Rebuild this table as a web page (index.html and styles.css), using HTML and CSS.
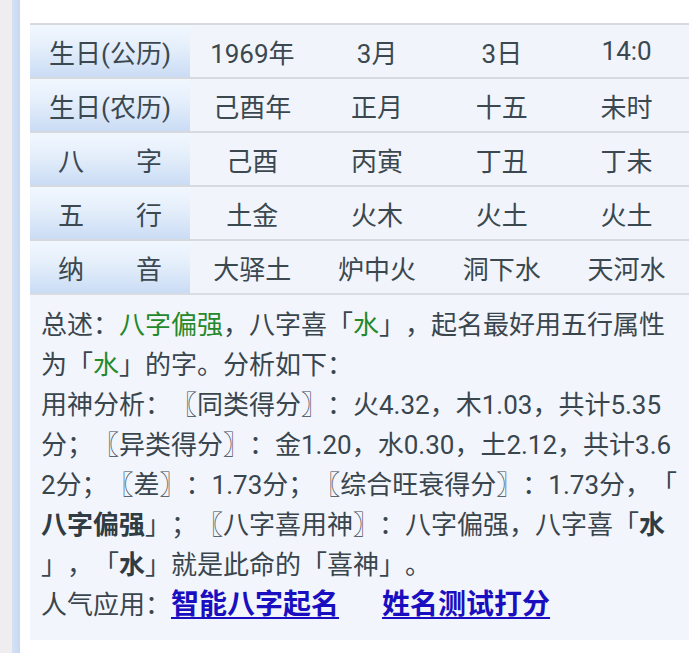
FILE: index.html
```html
<!DOCTYPE html>
<html lang="zh-CN">
<head>
<meta charset="utf-8">
<title>八字分析</title>
<link rel="stylesheet" href="styles.css">
</head>
<body>
<div class="frame">
  <div class="edge-gray"></div>
  <div class="edge-blue"></div>
  <main class="content">
    <table class="bazi">
      <colgroup>
        <col class="c-label"><col><col><col><col>
      </colgroup>
      <tr>
        <th>生日(公历)</th><td>1969年</td><td>3月</td><td>3日</td><td>14:0</td>
      </tr>
      <tr>
        <th>生日(农历)</th><td>己酉年</td><td>正月</td><td>十五</td><td>未时</td>
      </tr>
      <tr>
        <th><span class="just"><span>八</span><span>字</span></span></th><td>己酉</td><td>丙寅</td><td>丁丑</td><td>丁未</td>
      </tr>
      <tr>
        <th><span class="just"><span>五</span><span>行</span></span></th><td>土金</td><td>火木</td><td>火土</td><td>火土</td>
      </tr>
      <tr>
        <th><span class="just"><span>纳</span><span>音</span></span></th><td>大驿土</td><td>炉中火</td><td>洞下水</td><td>天河水</td>
      </tr>
    </table>
    <div class="analysis">
      <p>总述：<span class="green">八字偏强</span>，八字喜「<span class="green">水</span>」，起名最好用五行属性为「<span class="green">水</span>」的字。分析如下：</p>
      <p>用神分析：〖同类得分〗：火4.32，木1.03，共计5.35分；〖异类得分〗：金1.20，水0.30，土2.12，共计3.62分；〖差〗：1.73分；〖综合旺衰得分〗：1.73分，「<b>八字偏强</b>」；〖八字喜用神〗：八字偏强，八字喜「<b>水</b>」，「<b>水</b>」就是此命的「喜神」。</p>
      <p class="apps">人气应用：<a href="#" class="app-link">智能八字起名</a><a href="#" class="app-link second">姓名测试打分</a></p>
    </div>
  </main>
</div>
</body>
</html>
```

FILE: styles.css
```css
html, body {
  margin: 0;
  padding: 0;
  background: #ffffff;
}

body {
  font-family: "Roboto", "Noto Sans CJK SC", sans-serif;
  color: #3b4850;
  text-spacing-trim: space-all;
}

.frame {
  display: flex;
  min-height: 653px;
}

.edge-gray {
  width: 12px;
  background: #efedf0;
  flex: none;
}

.edge-blue {
  width: 8px;
  background: linear-gradient(90deg, #d5e2f5, #c6d8f2);
  flex: none;
}

.content {
  margin-left: 10px;
  padding-top: 23px;
  width: 659px;
  flex: none;
}

.bazi {
  width: 659px;
  table-layout: fixed;
  border-collapse: collapse;
  border-bottom: 2px solid #d9dde2;
}

.c-label {
  width: 160px;
}

.bazi th,
.bazi td {
  height: 52px;
  padding: 0;
  border-top: 2px solid #d6dadf;
  font-size: 26px;
  font-weight: normal;
  text-align: center;
  vertical-align: middle;
  white-space: nowrap;
  overflow: hidden;
  color: #3b4850;
}

.bazi td {
  background: #f1f5fb;
}

.bazi th {
  background: linear-gradient(180deg, #f2f7fe 0%, #e4eefb 45%, #cadcf4 100%);
}

.just {
  display: flex;
  justify-content: space-between;
  padding: 0 28px;
}

.analysis {
  background: #f3f5fc;
  padding: 10px 8px 15px 11px;
  font-size: 26px;
  line-height: 40px;
  word-break: break-all;
  line-break: anywhere;
  text-spacing-trim: space-all;
  color: #39464e;
}

.analysis p {
  margin: 0;
}

.green {
  color: #23892a;
}

.analysis b {
  font-weight: bold;
  color: #2f3c44;
}

.app-link {
  font-size: 28px;
  font-weight: bold;
  color: #1a0fc0;
  text-decoration: underline;
  text-decoration-thickness: 2px;
  text-underline-offset: 3px;
}

.app-link.second {
  margin-left: 43px;
}
```
